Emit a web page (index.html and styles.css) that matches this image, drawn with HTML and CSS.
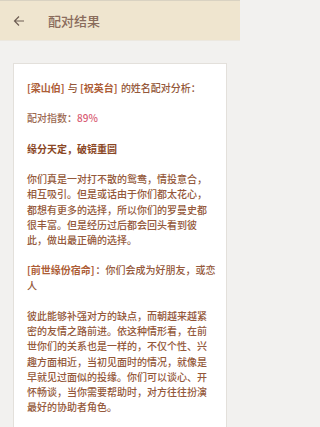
FILE: index.html
```html
<!DOCTYPE html>
<html lang="zh">
<head>
<meta charset="utf-8">
<link rel="stylesheet" href="styles.css">
</head>
<body>
<div class="app">
  <header class="bar">
    <svg class="back" width="12" height="12" viewBox="0 0 12 12"><path d="M11 6H1.5M6 1.5L1.5 6L6 10.5" fill="none" stroke="#6e5e54" stroke-width="1.2"/></svg>
    <span class="title">配对结果</span>
  </header>
  <main class="page">
    <section class="card">
      <p><b class="name">[梁山伯]</b> 与 <b class="name">[祝英台]</b> 的姓名配对分析：</p>
      <p class="score">配对指数：<span class="pct">89%</span></p>
      <p class="head">缘分天定，破镜重圆</p>
      <p>你们真是一对打不散的鸳鸯，情投意合，相互吸引。但是或话由于你们都太花心，都想有更多的选择，所以你们的罗曼史都很丰富。但是经历过后都会回头看到彼此，做出最正确的选择。</p>
      <p><b class="name">[前世缘份宿命]</b>：你们会成为好朋友，或恋人</p>
      <p>彼此能够补强对方的缺点，而朝越来越紧密的友情之路前进。依这种情形看，在前世你们的关系也是一样的，不仅个性、兴趣方面相近，当初见面时的情况，就像是早就见过面似的投缘。你们可以谈心、开怀畅谈，当你需要帮助时，对方往往扮演最好的协助者角色。</p>
    </section>
  </main>
</div>
</body>
</html>
```
FILE: styles.css
```css
html, body {
  margin: 0;
  padding: 0;
  background: #f2f1ef;
}
body {
  font-family: "Noto Sans CJK SC", "Noto Sans", sans-serif;
}
.app {
  width: 240px;
  height: 427px;
  overflow: hidden;
  display: flex;
  flex-direction: column;
  background: #f2f1ef;
}
.bar {
  flex: none;
  height: 41px;
  box-sizing: border-box;
  background: #efe5cf;
  border-top: 1px solid #d9d2c2;
  border-bottom: 1px solid #ece8e0;
  display: flex;
  align-items: center;
  padding-left: 13px;
}
.back {
  display: block;
  margin-right: 23px;
}
.title {
  font-size: 13px;
  font-weight: 500;
  color: #8a6c5c;
}
.page {
  flex: 1;
  display: flex;
  flex-direction: column;
  padding: 22px 13px 0 13px;
}
.card {
  flex: 1;
  background: #fff;
  border: 1px solid #e3e0db;
  border-bottom: none;
  padding: 16px 10px 0 13px;
  font-size: 10px;
  font-weight: 500;
  line-height: 15.2px;
  color: #94583a;
}
.card p {
  margin: 0 0 15.2px 0;
}
.name {
  color: #ad5d36;
  font-weight: 700;
  margin-right: 1px;
}
.score {
  color: #9c6a52;
}
.pct {
  color: #d85a72;
}
.head {
  font-weight: 700;
  color: #8a4624;
}
```
